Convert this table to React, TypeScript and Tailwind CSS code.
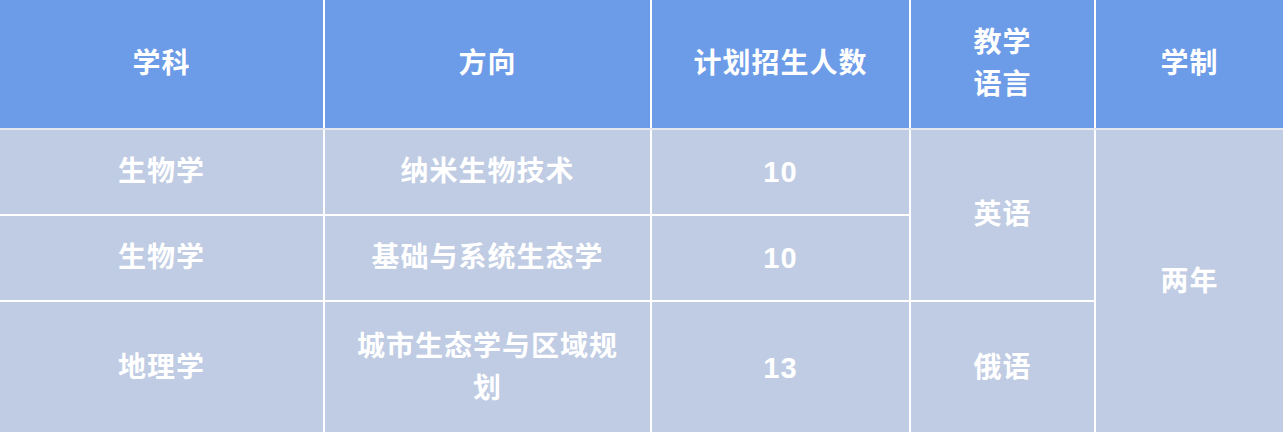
export default function App() {
  const cell = "text-center align-middle border-2 border-white px-2 leading-[42px]"
  const head = `${cell} py-[22px] bg-[#6c9be8] border-b-[#e3e7f0]`
  const body = `${cell} py-[21px] bg-[#c0cce3]`
  const last = `${cell} pt-[24px] pb-[24px] bg-[#c0cce3]`

  return (
    <div className="w-[1283px] h-[432px] overflow-hidden bg-white">
      <table
        className="w-full table-fixed border-collapse border-hidden text-white font-bold text-[28px] tracking-[1px]"
        style={{ fontFamily: '"Liberation Sans", "Noto Sans CJK SC", sans-serif' }}
      >
        <colgroup>
          <col className="w-[324px]" />
          <col className="w-[327px]" />
          <col className="w-[259px]" />
          <col className="w-[185px]" />
          <col className="w-[188px]" />
        </colgroup>
        <thead>
          <tr>
            <th className={head}>学科</th>
            <th className={head}>方向</th>
            <th className={head}>计划招生人数</th>
            <th className={head}>
              教学
              <br />
              语言
            </th>
            <th className={head}>学制</th>
          </tr>
        </thead>
        <tbody>
          <tr>
            <td className={body}>生物学</td>
            <td className={body}>纳米生物技术</td>
            <td className={`${body} text-[29px]`}>10</td>
            <td className={body} rowSpan={2}>英语</td>
            <td className={body} rowSpan={3}>两年</td>
          </tr>
          <tr>
            <td className={body}>生物学</td>
            <td className={body}>基础与系统生态学</td>
            <td className={`${body} text-[29px]`}>10</td>
          </tr>
          <tr>
            <td className={last}>地理学</td>
            <td className={last}>
              城市生态学与区域规
              <br />
              划
            </td>
            <td className={`${last} text-[29px]`}>13</td>
            <td className={last}>俄语</td>
          </tr>
        </tbody>
      </table>
    </div>
  )
}
